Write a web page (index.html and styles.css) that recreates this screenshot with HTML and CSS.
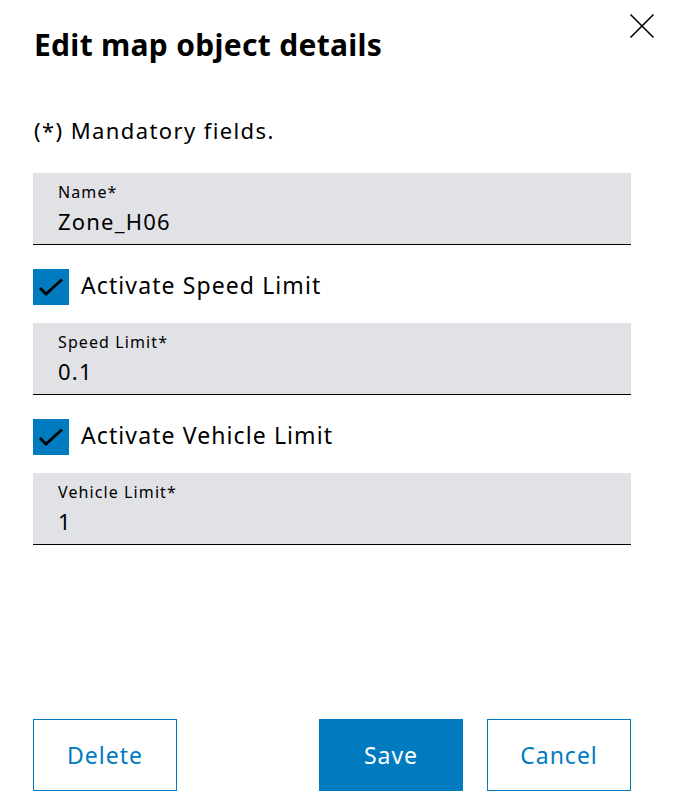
FILE: index.html
```html
<!DOCTYPE html>
<html>
<head>
<meta charset="utf-8">
<link rel="stylesheet" href="styles.css">
</head>
<body>
<div class="dialog">
  <header class="head">
    <h1 class="title">Edit map object details</h1>
    <button class="close" aria-label="Close">
      <svg width="26" height="26" viewBox="0 0 26 26"><path d="M1.5 1.5 L24.5 24.5 M24.5 1.5 L1.5 24.5" stroke="#000" stroke-width="1.6" fill="none"/></svg>
    </button>
  </header>
  <p class="note">(*) Mandatory fields.</p>
  <div class="form">
    <div class="field">
      <span class="label">Name*</span>
      <span class="value">Zone_H06</span>
    </div>
    <label class="check">
      <span class="box"><svg width="36" height="36" viewBox="0 0 36 36"><path d="M7 19 L13 25 L29 10.5" stroke="#000" stroke-width="2.8" fill="none"/></svg></span>
      <span class="check-text">Activate Speed Limit</span>
    </label>
    <div class="field">
      <span class="label">Speed Limit*</span>
      <span class="value">0.1</span>
    </div>
    <label class="check">
      <span class="box"><svg width="36" height="36" viewBox="0 0 36 36"><path d="M7 19 L13 25 L29 10.5" stroke="#000" stroke-width="2.8" fill="none"/></svg></span>
      <span class="check-text">Activate Vehicle Limit</span>
    </label>
    <div class="field">
      <span class="label">Vehicle Limit*</span>
      <span class="value">1</span>
    </div>
  </div>
  <footer class="actions">
    <button class="btn btn-outline">Delete</button>
    <div class="right">
      <button class="btn btn-primary">Save</button>
      <button class="btn btn-outline">Cancel</button>
    </div>
  </footer>
</div>
</body>
</html>
```
FILE: styles.css
```css
* { box-sizing: border-box; }
html, body { margin: 0; padding: 0; background: #fff; }
body {
  font-family: "Noto Sans", "Liberation Sans", sans-serif;
  color: #000;
  width: 674px;
  height: 808px;
}
.dialog {
  height: 808px;
  padding: 0 43px 17px 33px;
  display: flex;
  flex-direction: column;
}
.head {
  display: flex;
  justify-content: space-between;
  align-items: flex-start;
  height: 100px;
}
.title {
  margin: 25px 0 0 1px;
  font-size: 30px;
  line-height: 40px;
  font-weight: 700;
  letter-spacing: 0.3px;
}
.close {
  margin: 13px -24px 0 0;
  padding: 0;
  border: 0;
  background: none;
  width: 26px;
  height: 26px;
}
.note {
  margin: 16px 0 0 1px;
  font-size: 22px;
  line-height: 29px;
  letter-spacing: 1.4px;
}
.form {
  margin-top: 28px;
  display: flex;
  flex-direction: column;
}
.field {
  height: 72px;
  background: #e0e2e5;
  border-bottom: 1px solid #000;
  padding: 7px 0 0 25px;
  display: flex;
  flex-direction: column;
}
.label {
  font-size: 16px;
  line-height: 24px;
  letter-spacing: 1.1px;
}
.value {
  font-size: 22px;
  line-height: 34px;
  letter-spacing: 1.2px;
}
.check {
  display: flex;
  align-items: flex-start;
  gap: 12px;
  margin: 24px 0 18px;
}
.box {
  width: 36px;
  height: 36px;
  background: #007bc0;
  display: flex;
}
.check-text {
  margin-top: 1px;
  font-size: 23px;
  line-height: 30px;
  letter-spacing: 1.1px;
}
.actions {
  margin-top: auto;
  display: flex;
  justify-content: space-between;
}
.right { display: flex; gap: 24px; }
.btn {
  width: 144px;
  height: 72px;
  font-family: inherit;
  font-size: 23px;
  letter-spacing: 1px;
  border: 1px solid #007bc0;
  background: #fff;
  color: #007bc0;
  padding: 0;
}
.btn-primary { background: #007bc0; color: #fff; }
```
